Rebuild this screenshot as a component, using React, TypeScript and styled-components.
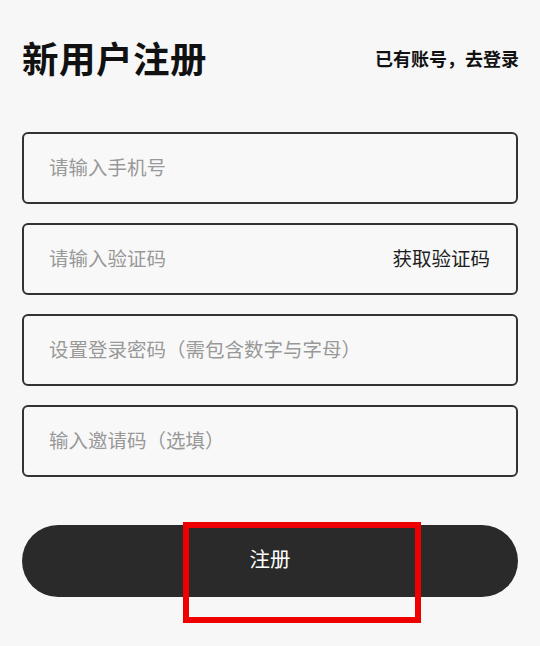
import React from "react";
import styled, { createGlobalStyle } from "styled-components";

const GlobalStyle = createGlobalStyle`
  html, body {
    margin: 0;
    padding: 0;
    background: #f7f7f7;
  }
  body {
    font-family: "Noto Sans CJK SC", "Noto Sans", sans-serif;
    width: 540px;
    height: 646px;
    overflow: hidden;
  }
  * { box-sizing: border-box; }
`;

const Page = styled.div`
  position: relative;
  width: 540px;
  height: 646px;
  padding: 33px 22px 0 22px;
  display: flex;
  flex-direction: column;
`;

const Header = styled.div`
  height: 50px;
  display: flex;
  align-items: center;
  justify-content: space-between;
`;

const Title = styled.h1`
  margin: 0;
  font-size: 36.5px;
  font-weight: 700;
  color: #111;
  letter-spacing: 0.5px;
  line-height: 1;
`;

const LoginLink = styled.a`
  font-size: 18px;
  font-weight: 700;
  color: #111;
  text-decoration: none;
  margin-right: -1px;
`;

const Form = styled.div`
  margin-top: 49px;
  display: flex;
  flex-direction: column;
  gap: 19px;
`;

const Field = styled.div`
  height: 72px;
  border: 2px solid #333;
  border-radius: 6px;
  display: flex;
  align-items: center;
  padding: 0 26px 3px 25px;
  background: #f8f8f8;
`;

const Input = styled.input`
  flex: 1;
  min-width: 0;
  border: none;
  outline: none;
  background: transparent;
  font-family: "Noto Sans CJK SC", "Noto Sans", sans-serif;
  font-size: 19.5px;
  color: #222;
  padding: 0;
  &::placeholder {
    color: #999;
  }
`;

const CodeButton = styled.span`
  font-size: 19.5px;
  color: #1e1e1e;
  white-space: nowrap;
`;

const Submit = styled.button`
  margin-top: 48px;
  height: 72px;
  width: 100%;
  border: none;
  border-radius: 36px;
  background: #2a2a2a;
  color: #fff;
  font-family: "Noto Sans CJK SC", "Noto Sans", sans-serif;
  font-size: 20.5px;
  padding: 0 0 7px 0;
  cursor: pointer;
`;

const Highlight = styled.div`
  position: absolute;
  left: 183px;
  top: 522px;
  width: 238px;
  height: 101px;
  border: 6px solid #ee0000;
  pointer-events: none;
`;

export default function App() {
  return (
    <>
      <GlobalStyle />
      <Page>
        <Header>
          <Title>新用户注册</Title>
          <LoginLink href="#">已有账号，去登录</LoginLink>
        </Header>
        <Form>
          <Field>
            <Input placeholder="请输入手机号" />
          </Field>
          <Field>
            <Input placeholder="请输入验证码" />
            <CodeButton>获取验证码</CodeButton>
          </Field>
          <Field>
            <Input placeholder="设置登录密码（需包含数字与字母）" />
          </Field>
          <Field>
            <Input placeholder="输入邀请码（选填）" />
          </Field>
        </Form>
        <Submit>注册</Submit>
        <Highlight />
      </Page>
    </>
  );
}
